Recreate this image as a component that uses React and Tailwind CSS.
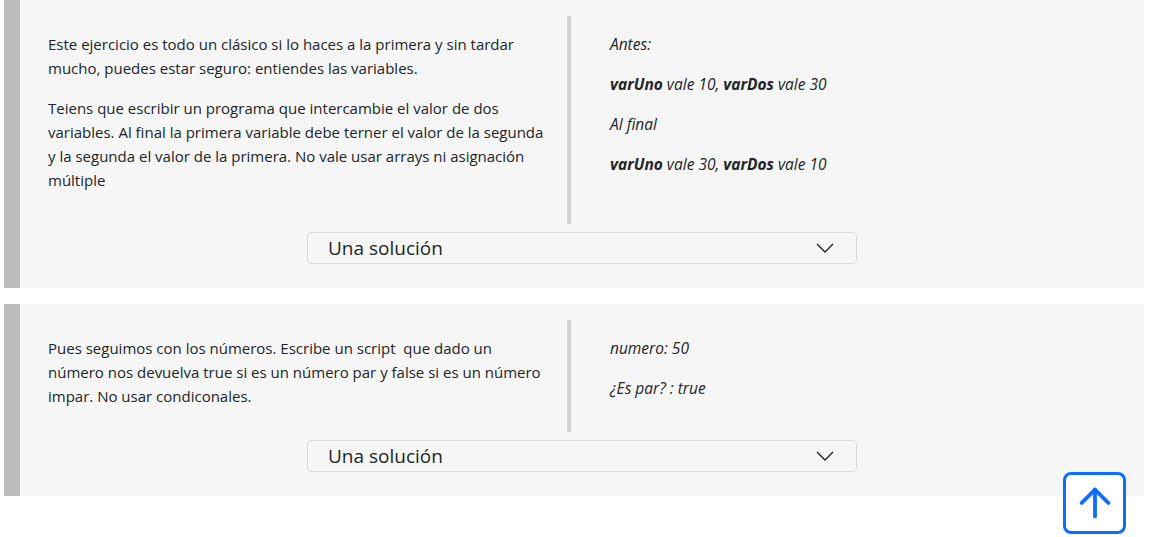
import { ArrowUp } from "lucide-react";

const Chevron = () => (
  <svg width="18" height="10" viewBox="0 0 18 10" fill="none" stroke="#212529" strokeWidth="1.4">
    <polyline points="1,1 9,9 17,1" />
  </svg>
);

const SolutionButton = () => (
  <div className="mt-2 flex justify-center">
    <button className="flex h-8 w-[550px] items-center justify-between rounded border border-[#d9d9d9] bg-[#f6f6f6] pl-5 pr-[22px] text-[19px] text-[#212529]">
      <span>Una solución</span>
      <Chevron />
    </button>
  </div>
);

const Card = ({ left, right }) => (
  <section className="ml-1 w-[1140px] border-l-[16px] border-[#bdbdbd] bg-[#f6f6f6] pt-4 pb-6">
    <div className="flex">
      <div className="w-[547px] shrink-0 pl-7 pr-4 py-4">{left}</div>
      <div className="rounded-[2px] border-l-4 border-[#d3d3d3] pl-[39px] py-4 text-[15.5px] italic">
        {right}
      </div>
    </div>
    <SolutionButton />
  </section>
);

export default function App() {
  return (
    <div
      className="min-h-screen bg-white text-[15px] leading-6 text-[#212529]"
      style={{ fontFamily: '"Open Sans", "Noto Sans", sans-serif' }}
    >
      <Card
        left={
          <>
            <p className="mb-4">
              Este ejercicio es todo un clásico si lo haces a la primera y sin tardar mucho, puedes estar seguro: entiendes las variables.
            </p>
            <p className="mb-4">
              Teiens que escribir un programa que intercambie el valor de dos variables. Al final la primera variable debe terner el valor de la segunda y la segunda el valor de la primera. No vale usar arrays ni asignación múltiple
            </p>
          </>
        }
        right={
          <>
            <p className="mb-4">Antes:</p>
            <p className="mb-4">
              <b>varUno</b> vale 10, <b>varDos</b> vale 30
            </p>
            <p className="mb-4">Al final</p>
            <p className="mb-4">
              <b>varUno</b> vale 30, <b>varDos</b> vale 10
            </p>
          </>
        }
      />
      <div className="h-4" />
      <Card
        left={
          <div>
            Pues seguimos con los números. Escribe un script&nbsp; que dado un número nos devuelva true si es un número par y false si es un número impar. No usar condiconales.
          </div>
        }
        right={
          <>
            <p className="mb-4">numero: 50</p>
            <p className="mb-4">¿Es par? : true</p>
          </>
        }
      />
      <button className="fixed right-[25px] bottom-[3px] flex h-[62px] w-[63px] items-center justify-center rounded-lg border-[3px] border-[#0d6efd] bg-white text-[#0d6efd]">
        <ArrowUp size={46} strokeWidth={2} />
      </button>
    </div>
  );
}
